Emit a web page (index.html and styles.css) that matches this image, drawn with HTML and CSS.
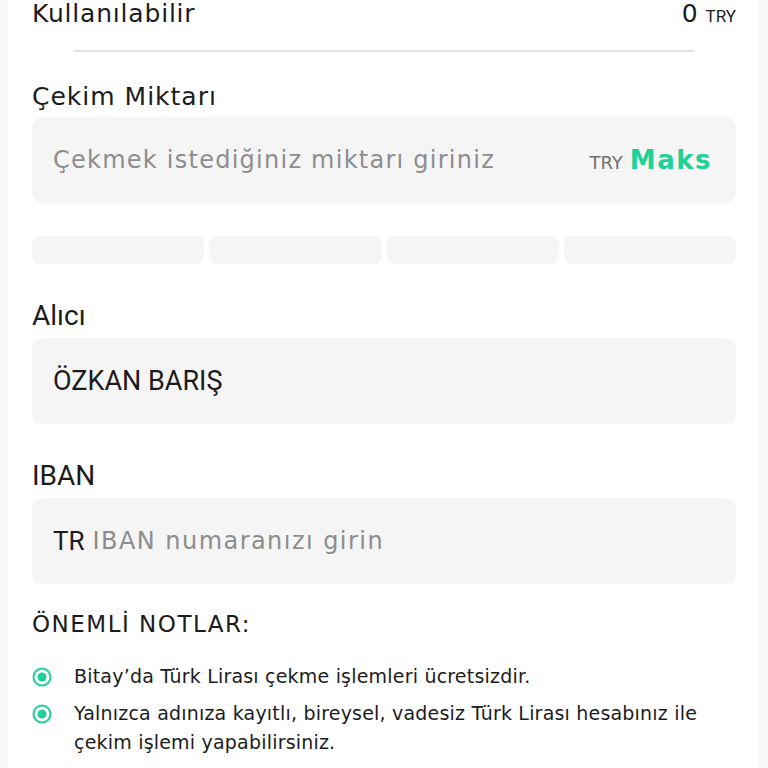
FILE: index.html
```html
<!DOCTYPE html>
<html lang="tr">
<head>
    <meta charset="UTF-8">
    <meta name="viewport" content="width=device-width, initial-scale=1.0">
    <title>TL Çekme</title>
    <link rel="stylesheet" href="styles.css">
</head>
<body>

    <div class="card">
        <div class="balance">
            <span class="balance-label">Kullanılabilir</span>
            <span class="balance-value">0 <small>TRY</small></span>
        </div>
        <div class="divider"></div>

        <div class="field">
            <label class="field-label" for="amount">Çekim Miktarı</label>
            <div class="input-box">
                <input type="text" id="amount" class="input" placeholder="Çekmek istediğiniz miktarı giriniz">
                <span class="unit">TRY</span>
                <button type="button" class="max-button">Maks</button>
            </div>
        </div>

        <div class="chips">
            <span class="chip"></span>
            <span class="chip"></span>
            <span class="chip"></span>
            <span class="chip"></span>
        </div>

        <div class="field">
            <label class="field-label sys" for="receiver">Alıcı</label>
            <div class="input-box">
                <input type="text" id="receiver" class="input sys" value="ÖZKAN BARIŞ" readonly>
            </div>
        </div>

        <div class="field">
            <label class="field-label sys" for="iban">IBAN</label>
            <div class="input-box">
                <span class="prefix">TR</span>
                <input type="text" id="iban" class="input iban" placeholder="IBAN numaranızı girin">
            </div>
        </div>

        <h3 class="notes-title">ÖNEMLİ NOTLAR:</h3>
        <ul class="notes">
            <li>
                <svg class="dot" width="20" height="20" viewBox="0 0 20 20">
                    <circle cx="10" cy="10" r="8.5" fill="none" stroke="#1fd194" stroke-width="2"/>
                    <circle cx="10" cy="10" r="4.5" fill="#1fd194"/>
                </svg>
                <span>Bitay’da Türk Lirası çekme işlemleri ücretsizdir.</span>
            </li>
            <li>
                <svg class="dot" width="20" height="20" viewBox="0 0 20 20">
                    <circle cx="10" cy="10" r="8.5" fill="none" stroke="#1fd194" stroke-width="2"/>
                    <circle cx="10" cy="10" r="4.5" fill="#1fd194"/>
                </svg>
                <span>Yalnızca adınıza kayıtlı, bireysel, vadesiz Türk Lirası hesabınız ile çekim işlemi yapabilirsiniz.</span>
            </li>
        </ul>
    </div>

</body>
</html>
```

FILE: styles.css
```css
body {
    margin: 0;
    background-color: #f7f7f7;
    font-family: "DejaVu Sans", Verdana, sans-serif;
    color: #1c1c1c;
    overflow: hidden;
}

.card {
    background-color: #fff;
    margin-left: 8px;
    width: 751px;
    padding: 0 23px 40px 24px;
    box-sizing: border-box;
    min-height: 100vh;
}

.balance {
    display: flex;
    justify-content: space-between;
    align-items: baseline;
    margin-top: -2px;
    line-height: 32px;
}

.balance-label {
    font-size: 25px;
    letter-spacing: 0.8px;
}

.balance-value {
    font-size: 25px;
}

.balance-value small {
    font-family: Roboto, Arial, sans-serif;
    font-size: 17px;
}

.divider {
    height: 2px;
    background-color: #e2e2e2;
    margin: 18px 42px 0 42px;
}

.field-label {
    display: block;
    font-size: 25px;
    letter-spacing: 1px;
    line-height: 32px;
    margin-top: 29px;
    margin-bottom: 4px;
}

.field-label.sys {
    font-family: Roboto, Arial, sans-serif;
    font-size: 28px;
    letter-spacing: 0;
    margin-top: 36px;
    margin-bottom: 6px;
}

.input-box {
    display: flex;
    align-items: center;
    height: 86px;
    background-color: #f5f5f5;
    border-radius: 10px;
    padding: 0 24px 0 21px;
}

.input {
    flex: 1;
    min-width: 0;
    border: none;
    background: transparent;
    outline: none;
    font-family: "DejaVu Sans", Verdana, sans-serif;
    font-size: 24px;
    letter-spacing: 1.25px;
    color: #1c1c1c;
    padding: 0;
}

.input::placeholder {
    color: #8d8d8d;
}

.input.iban {
    letter-spacing: 1.45px;
}

.input.sys {
    font-family: Roboto, Arial, sans-serif;
    font-size: 27px;
    letter-spacing: 0;
}

.unit {
    font-size: 18px;
    color: #6f6f6f;
    margin-right: 7px;
    margin-top: 5px;
}

.max-button {
    border: none;
    background: none;
    padding: 0;
    font-family: "DejaVu Sans", Verdana, sans-serif;
    font-size: 26px;
    font-weight: bold;
    letter-spacing: 1.5px;
    color: #1fd194;
}

.prefix {
    font-family: Roboto, Arial, sans-serif;
    font-size: 26px;
    margin-right: 8px;
}

.chips {
    display: grid;
    grid-template-columns: repeat(4, 1fr);
    gap: 5px;
    margin-top: 33px;
}

.chip {
    height: 28px;
    background-color: #f5f5f5;
    border-radius: 8px;
}

.notes-title {
    font-size: 23px;
    font-weight: normal;
    letter-spacing: 1.5px;
    line-height: 32px;
    margin: 24px 0 22px 0;
}

.notes {
    list-style: none;
    padding: 0;
    margin: 0;
}

.notes li {
    display: flex;
    align-items: flex-start;
    gap: 22px;
    font-size: 19px;
    letter-spacing: 0.2px;
    line-height: 29px;
    margin-bottom: 8px;
}

.dot {
    flex-shrink: 0;
    margin-top: 5px;
}
```
